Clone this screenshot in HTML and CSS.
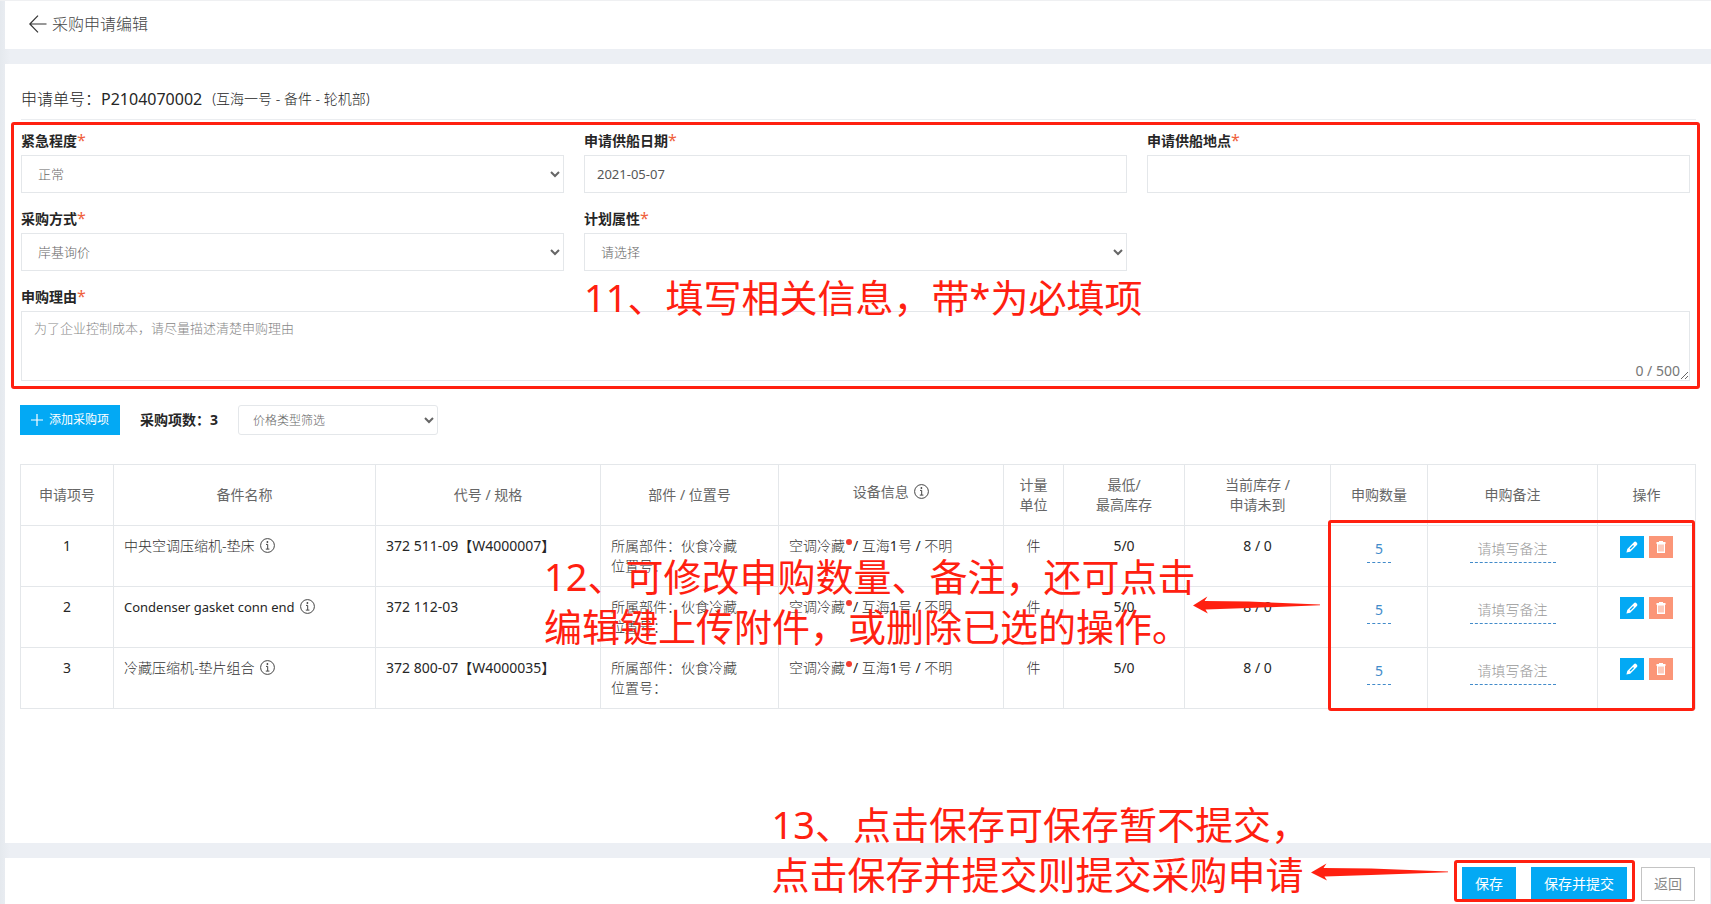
FILE: index.html
```html
<!DOCTYPE html>
<html lang="zh-CN">
<head>
<meta charset="utf-8">
<title>采购申请编辑</title>
<link rel="stylesheet" href="styles.css">
</head>
<body>
<svg class="symbols" aria-hidden="true">
  <symbol id="info" viewBox="0 0 15 15">
    <circle cx="7.5" cy="7.5" r="6.9" fill="none" stroke="currentColor"/>
    <path d="M6 6.4h1.7v4.6M5.8 11.1h3.6" fill="none" stroke="currentColor"/>
    <circle cx="7.4" cy="4" r=".9" fill="currentColor"/>
  </symbol>
  <symbol id="pencil" viewBox="0 0 12 12">
    <path fill="currentColor" fill-rule="evenodd" d="M.4 11.6 1.3 7.9 7.9 1.2Q9.1 0 10.4 1.2L10.9 1.7Q12 2.9 10.9 4.1L4.2 10.7ZM3.600 7.600 4.500 8.500 8 4.900 7.100 4Z"/>
  </symbol>
  <symbol id="trash" viewBox="0 0 10 12">
    <path fill="currentColor" fill-rule="evenodd" d="M3 0h4v1h2.500v2H9v9H1V3H.5V1H3ZM2.500 3.500v7h1v-7ZM4.500 3.500v7h1v-7ZM6.500 3.500v7h1v-7Z"/>
  </symbol>
  <symbol id="arrow" viewBox="0 0 137 18">
    <path fill="currentColor" d="M0 9.500 15.500.5 12.500 5 60 5.500 137 8.500 137 9.200 60 12 13.500 13.500 16 17.500Z"/>
  </symbol>
</svg>
<div class="page">
  <header class="topbar">
    <a class="back" href="#" aria-label="返回上一页"><svg width="18" height="18" viewBox="0 0 18 18"><path d="M17.500 9H1M9 .7.800 9 9 17.300" fill="none" stroke="currentColor" stroke-width="1.200"/></svg></a>
    <h1 class="topbar-title">采购申请编辑</h1>
  </header>

  <main class="panel">
    <div class="order">
      <span class="order-label">申请单号：</span><span class="order-no">P2104070002</span>
      <span class="order-info">(互海一号 - 备件 - 轮机部)</span>
    </div>

    <form class="form">
      <div class="field">
        <label for="urgency">紧急程度<i>*</i></label>
        <select id="urgency"><option>正常</option></select>
      </div>
      <div class="field">
        <label for="date">申请供船日期<i>*</i></label>
        <input id="date" type="text" value="2021-05-07">
      </div>
      <div class="field">
        <label for="place">申请供船地点<i>*</i></label>
        <input id="place" type="text">
      </div>
      <div class="field">
        <label for="method">采购方式<i>*</i></label>
        <select id="method"><option>岸基询价</option></select>
      </div>
      <div class="field">
        <label for="plan">计划属性<i>*</i></label>
        <select id="plan"><option>请选择</option></select>
      </div>
      <div class="field field-wide">
        <label for="reason">申购理由<i>*</i></label>
        <textarea id="reason" placeholder="为了企业控制成本，请尽量描述清楚申购理由"></textarea>
        <span class="counter">0 / 500</span>
      </div>
      <div class="mark mark-form"></div>
      <p class="note note-form">11、填写相关信息，带*为必填项</p>
    </form>

    <div class="toolbar">
      <button class="btn btn-add" type="button"><svg width="12" height="12" viewBox="0 0 12 12"><path d="M6 0v12M0 6h12" stroke="currentColor" stroke-width="1.200"/></svg>添加采购项</button>
      <strong class="count">采购项数：3</strong>
      <select class="filter" aria-label="价格类型筛选"><option>价格类型筛选</option></select>
    </div>

    <div class="items-wrap">
      <table class="items">
        <colgroup><col class="c-no"><col class="c-name"><col class="c-code"><col class="c-part"><col class="c-device"><col class="c-unit"><col class="c-limit"><col class="c-stock"><col class="c-qty"><col class="c-remark"><col class="c-action"></colgroup>
        <thead>
          <tr>
            <th>申请项号</th><th>备件名称</th><th>代号 / 规格</th><th>部件 / 位置号</th>
            <th><span class="th-info">设备信息 <svg class="info"><use href="#info"/></svg></span></th>
            <th>计量<br>单位</th><th>最低/<br>最高库存</th><th>当前库存 /<br>申请未到</th><th>申购数量</th><th>申购备注</th><th>操作</th>
          </tr>
        </thead>
        <tbody>
          <tr>
            <td class="mid">1</td>
            <td class="soft">中央空调压缩机-垫床 <svg class="info"><use href="#info"/></svg></td>
            <td>372 511-09【W4000007】</td>
            <td class="soft">所属部件：伙食冷藏<br>位置号：</td>
            <td class="soft">空调冷藏<span class="dot"></span><b>/</b> 互海<b>1</b>号 <b>/</b> 不明</td>
            <td class="mid soft">件</td><td class="mid">5/0</td><td class="mid">8 / 0</td>
            <td class="mid"><input class="edit edit-qty" aria-label="申购数量" value="5"></td>
            <td class="mid"><input class="edit edit-remark" aria-label="申购备注" placeholder="请填写备注"></td>
            <td><div class="actions"><button class="icon-btn" type="button" aria-label="编辑"><svg width="12" height="12"><use href="#pencil"/></svg></button><button class="icon-btn icon-btn-del" type="button" aria-label="删除"><svg width="10" height="12"><use href="#trash"/></svg></button></div></td>
          </tr>
          <tr>
            <td class="mid">2</td>
            <td><span class="latin">Condenser gasket conn end</span> <svg class="info"><use href="#info"/></svg></td>
            <td>372 112-03</td>
            <td class="soft">所属部件：伙食冷藏<br>位置号：</td>
            <td class="soft">空调冷藏<span class="dot"></span><b>/</b> 互海<b>1</b>号 <b>/</b> 不明</td>
            <td class="mid soft">件</td><td class="mid">5/0</td><td class="mid">8 / 0</td>
            <td class="mid"><input class="edit edit-qty" aria-label="申购数量" value="5"></td>
            <td class="mid"><input class="edit edit-remark" aria-label="申购备注" placeholder="请填写备注"></td>
            <td><div class="actions"><button class="icon-btn" type="button" aria-label="编辑"><svg width="12" height="12"><use href="#pencil"/></svg></button><button class="icon-btn icon-btn-del" type="button" aria-label="删除"><svg width="10" height="12"><use href="#trash"/></svg></button></div></td>
          </tr>
          <tr>
            <td class="mid">3</td>
            <td class="soft">冷藏压缩机-垫片组合 <svg class="info"><use href="#info"/></svg></td>
            <td>372 800-07【W4000035】</td>
            <td class="soft">所属部件：伙食冷藏<br>位置号：</td>
            <td class="soft">空调冷藏<span class="dot"></span><b>/</b> 互海<b>1</b>号 <b>/</b> 不明</td>
            <td class="mid soft">件</td><td class="mid">5/0</td><td class="mid">8 / 0</td>
            <td class="mid"><input class="edit edit-qty" aria-label="申购数量" value="5"></td>
            <td class="mid"><input class="edit edit-remark" aria-label="申购备注" placeholder="请填写备注"></td>
            <td><div class="actions"><button class="icon-btn" type="button" aria-label="编辑"><svg width="12" height="12"><use href="#pencil"/></svg></button><button class="icon-btn icon-btn-del" type="button" aria-label="删除"><svg width="10" height="12"><use href="#trash"/></svg></button></div></td>
          </tr>
        </tbody>
      </table>
      <div class="mark mark-items"></div>
      <svg class="arrow arrow-items" viewBox="0 0 137 18" preserveAspectRatio="none"><use href="#arrow"/></svg>
      <p class="note note-items">12、可修改申购数量、备注，还可点击<br>编辑键上传附件，或删除已选的操作。</p>
    </div>
  </main>

  <footer class="footer">
    <div class="save-group">
      <button class="btn" type="button">保存</button>
      <button class="btn" type="button">保存并提交</button>
      <div class="mark mark-save"></div>
    </div>
    <button class="btn btn-plain" type="button">返回</button>
    <svg class="arrow arrow-save" viewBox="0 0 137 18"><use href="#arrow"/></svg>
    <p class="note note-save">13、点击保存可保存暂不提交，<br>点击保存并提交则提交采购申请</p>
  </footer>
</div>
</body>
</html>
```
FILE: styles.css
```css
* { box-sizing: border-box; }

body {
  margin: 0;
  background: #eceff4;
  color: #262626;
  font: 14px/20px "Noto Sans", "Noto Sans CJK SC", sans-serif;
}

input, select, textarea, button { font: inherit; border-radius: 0; }

.symbols { position: absolute; width: 0; height: 0; }

.page {
  display: flex;
  flex-direction: column;
  gap: 15px;
  min-height: 100vh;
  padding-left: 5px;
  border-top: 1px solid #eff0f2;
  background: linear-gradient(90deg, #e5e9ee, #eceff4 10px);
}

.topbar {
  display: flex;
  align-items: center;
  gap: 5px;
  height: 48px;
  padding: 0 24px 2px;
  background: #fff;
}
.back { display: flex; color: #333; }
.topbar-title { margin: 0; font-size: 16px; font-weight: 300; color: #444; }

.panel {
  flex: 1;
  padding: 15px 15px 0;
  background: #fff;
}

.order {
  display: flex;
  align-items: center;
  height: 41px;
  margin-left: 1px;
  border-bottom: 1px solid #ebedf0;
}
.order-label { font-size: 16px; font-weight: 300; }
.order-no { font-size: 16px; }
.order-info { margin-left: 10px; font-weight: 300; }

.form {
  position: relative;
  display: grid;
  grid-template-columns: repeat(3, 1fr);
  gap: 15px 20px;
  margin: 0 6px 0 1px;
  padding-top: 10px;
}
.field { display: flex; flex-direction: column; gap: 5px; }
.field-wide { position: relative; grid-column: 1 / -1; }
.field label { height: 20px; font-weight: 700; }
.field i { font-style: normal; font-size: 16px; font-weight: 400; color: #ef5f3c; }
.field input, .field select, .field textarea {
  height: 38px;
  border: 1px solid #e4e7ea;
  background: #fff;
  color: #565656;
  font-size: 13px;
  outline: 0;
}
.field input { padding: 0 12px; }
.field select { padding: 0 0 0 12px; color: #666; font-weight: 300; }
.field textarea { height: 70px; padding: 6px 12px; resize: vertical; }
.field textarea::placeholder { color: #888; font-weight: 300; }
.counter { position: absolute; right: 10px; bottom: 0; color: #777; }

.toolbar { display: flex; align-items: center; gap: 20px; margin-top: 24px; }
.btn {
  height: 34px;
  padding: 0 13px;
  border: 0;
  background: #03a9f4;
  color: #fff;
}
.btn-add {
  display: flex;
  align-items: center;
  gap: 6px;
  height: 30px;
  padding: 0 11px;
  font-size: 12px;
}
.btn-plain { border: 1px solid #c4c4c4; background: #fff; color: #888; padding: 0 12px; }
.filter {
  width: 200px;
  height: 30px;
  padding: 0 0 0 10px;
  border: 1px solid #e4e7ea;
  border-radius: 3px;
  background: #fff;
  color: #666;
  font-size: 12px;
  font-weight: 300;
}

.items-wrap { position: relative; margin-top: 29px; }
.items { width: 100%; table-layout: fixed; border-collapse: collapse; }
.items th, .items td {
  height: 61px;
  padding: 10px;
  border: 1px solid #e4e7ea;
  vertical-align: top;
  text-align: left;
  white-space: nowrap;
}
.items th { padding: 0; vertical-align: middle; text-align: center; font-weight: 400; color: #666; }
.items .mid { text-align: center; }
.items .soft { font-weight: 300; color: #333; }
.items b { font-weight: 400; color: #262626; }
.latin { font-size: 13px; }
.th-info { display: block; padding-bottom: 6px; }
.info { width: 15px; height: 15px; margin-left: 2px; vertical-align: -2px; color: #444; }
.dot {
  display: inline-block;
  width: 6px;
  height: 6px;
  margin: 0 1px;
  border-radius: 50%;
  background: #f23c30;
  vertical-align: 6px;
}
.c-no { width: 93px; }
.c-name { width: 262px; }
.c-code { width: 225px; }
.c-part { width: 178px; }
.c-device { width: 225px; }
.c-unit { width: 60px; }
.c-limit { width: 121px; }
.c-stock { width: 146px; }
.c-qty { width: 97px; }
.c-remark { width: 170px; }
.c-action { width: 98px; }

.edit {
  display: block;
  height: 27px;
  margin: 0 auto;
  padding: 0 0 2px;
  border: 0;
  border-bottom: 1px dashed #428bca;
  background: none;
  color: #428bca;
  text-align: center;
  outline: 0;
}
.edit::placeholder { color: #999; font-weight: 300; }
.edit-qty { width: 24px; }
.edit-remark { width: 86px; }

.actions { display: flex; justify-content: center; gap: 5px; }
.icon-btn {
  display: flex;
  align-items: center;
  justify-content: center;
  width: 24px;
  height: 22px;
  padding: 0;
  border: 0;
  background: #03a9f4;
  color: #fff;
}
.icon-btn-del { background: #fb9678; }

.footer {
  position: relative;
  display: flex;
  justify-content: flex-end;
  gap: 14px;
  margin-right: 1px;
  padding: 9px 15px 3px;
  background: #fff;
}
.save-group { position: relative; display: flex; gap: 15px; }

/* Guide overlay: frames, arrows and step notes */
.mark {
  position: absolute;
  border: 3px solid #ff2010;
  border-radius: 3px;
  pointer-events: none;
}
.mark-form { inset: 2px -10px -8px; }
.mark-items { top: 56px; right: 1px; bottom: -2px; width: 367px; }
.mark-save { inset: -7px -8px -1px; }
.arrow { position: absolute; height: 18px; color: #ff2010; pointer-events: none; }
.arrow-items { top: 132px; right: 376px; width: 127px; }
.arrow-save { top: 5px; right: 262px; width: 137px; }
.note {
  position: absolute;
  margin: 0;
  color: #ff2010;
  font-size: 38px;
  line-height: 50px;
  white-space: nowrap;
  pointer-events: none;
}
.note-form { left: 563px; top: 152px; }
.note-items { left: 524px; top: 87px; }
.note-save { right: 401px; top: -59px; }
```
